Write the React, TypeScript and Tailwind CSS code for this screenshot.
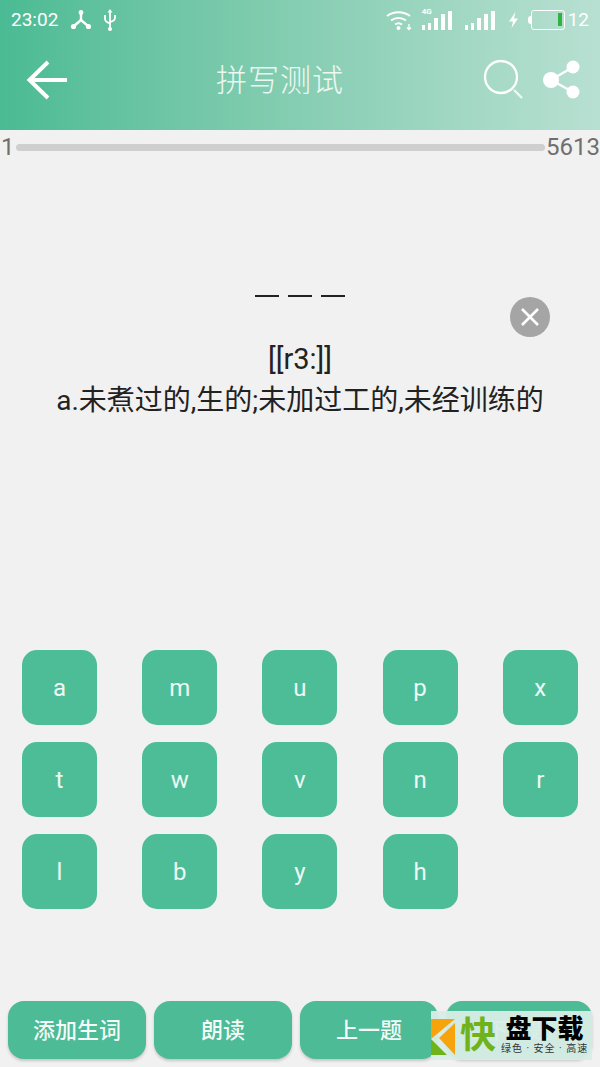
import React from 'react';

const CJK = "font-['Roboto','Noto_Sans_CJK_SC',sans-serif]";

const keyRows = [
  ['a', 'm', 'u', 'p', 'x'],
  ['t', 'w', 'v', 'n', 'r'],
  ['l', 'b', 'y', 'h'],
];

const StatusBar = () => (
  <div className="flex h-[38px] items-center pl-[11px] pr-[11px] pt-[1px] text-white">
    <span className="text-[19px] leading-none">23:02</span>
    {/* tethering */}
    <svg className="ml-[12px]" width="22" height="22" viewBox="0 0 22 22" fill="none" stroke="#fff" strokeWidth="2.4">
      <path d="M11 3v8M11 11l-7 6M11 11l7 6" />
      <circle cx="11" cy="3.5" r="2.4" fill="#fff" stroke="none" />
      <circle cx="3.5" cy="17.5" r="2.6" fill="#fff" stroke="none" />
      <circle cx="18.5" cy="17.5" r="2.6" fill="#fff" stroke="none" />
    </svg>
    {/* usb */}
    <svg className="ml-[11px]" width="14" height="24" viewBox="0 0 14 24" fill="none" stroke="#fff" strokeWidth="1.8">
      <path d="M7 2v19" />
      <path d="M4.5 4.5 7 1l2.5 3.5z" fill="#fff" stroke="none" />
      <path d="M2 7v4c0 2 1 3 5 4.5M12 7v3c0 2-1 3-5 4" />
      <circle cx="7" cy="21" r="2" fill="#fff" stroke="none" />
    </svg>
    <div className="ml-auto flex items-center">
      {/* wifi */}
      <svg width="28" height="22" viewBox="0 0 28 22" fill="none" stroke="#fff" strokeWidth="2">
        <path d="M2 7c6.500-5 16.500-5 23 0M6 11.500c4.500-3.500 10.500-3.500 15 0M10 15.500c2-1.500 5-1.500 7 0" />
        <circle cx="13.500" cy="19" r="2" fill="#fff" stroke="none" />
        <path d="M24 15v5M22 18.500l2 2 2-2" strokeWidth="1.300" />
      </svg>
      {/* sim 1 */}
      <div className="relative ml-[9px] flex h-[20px] items-end gap-[3px]">
        <span className="absolute left-0 top-[-2px] text-[8px] font-bold leading-none">4G</span>
        <i className="h-[5px] w-[3px] bg-white" />
        <i className="h-[7px] w-[3px] bg-white" />
        <i className="h-[12px] w-[4px] bg-white" />
        <i className="h-[16px] w-[4px] bg-white" />
        <i className="h-[19px] w-[4px] bg-white" />
      </div>
      {/* sim 2 */}
      <div className="ml-[13px] flex h-[20px] items-end gap-[3px]">
        <i className="h-[5px] w-[3px] bg-white" />
        <i className="h-[7px] w-[3px] bg-white" />
        <i className="h-[12px] w-[4px] bg-white" />
        <i className="h-[16px] w-[4px] bg-white" />
        <i className="h-[19px] w-[4px] bg-white" />
      </div>
      {/* charging bolt */}
      <svg className="ml-[13px]" width="11" height="18" viewBox="0 0 11 18">
        <path d="M7.500 1 1 10.500h4L3.500 17 10 7.500H6z" fill="#fff" />
      </svg>
      {/* battery */}
      <div className="ml-[9px] flex items-center">
        <i className="h-[8px] w-[3px] rounded-l-sm bg-white" />
        <div className="flex h-[20px] w-[34px] items-center justify-end rounded-[3px] border-[1.500px] border-white pr-[2px]">
          <i className="h-[13px] w-[4px] bg-[#2fb53f]" />
        </div>
      </div>
      <span className="ml-[3px] text-[19px] leading-none">12</span>
    </div>
  </div>
);

const Toolbar = () => (
  <div className="flex flex-1 items-center pb-[8px]">
    <svg className="ml-[26px]" width="42" height="42" viewBox="0 0 42 42" fill="none" stroke="#fff" strokeWidth="4">
      <path d="M41 21H4M22 3 3.500 21 22 39" />
    </svg>
    <h1 className="flex-1 text-center text-[31px] font-light leading-none tracking-[1px] text-white/85 pl-[10px]">拼写测试</h1>
    <svg width="44" height="44" viewBox="0 0 44 44" fill="none" stroke="#fff" strokeWidth="2.300">
      <circle cx="19" cy="19" r="16" />
      <path d="M32 32l8 8" strokeOpacity="0.800" />
    </svg>
    <svg className="ml-[16px] mr-[20px]" width="38" height="40" viewBox="0 0 38 40" fill="#fff">
      <circle cx="9" cy="20" r="8" />
      <circle cx="31" cy="7" r="6.500" />
      <circle cx="31" cy="32" r="6.500" />
      <path d="M9 20 31 7M9 20l22 12" stroke="#fff" strokeWidth="2.500" />
    </svg>
  </div>
);

const LetterKey = ({ letter }: { letter: string }) => (
  <div className="flex h-[75px] w-[75px] items-center justify-center rounded-[15px] bg-[#4dbd97] text-[24px] text-white/90">
    {letter}
  </div>
);

const ActionButton = ({ label, className }: { label: string; className: string }) => (
  <div
    className={`flex h-[58px] items-center justify-center rounded-[16px] bg-[#4dbb95] text-[22px] font-medium text-white/95 shadow-[0_2px_3px_rgba(0,0,0,0.18)] ${className}`}
  >
    {label}
  </div>
);

export default function App() {
  return (
    <div className={`relative flex h-[1067px] w-[600px] flex-col overflow-hidden bg-[#f1f1f1] ${CJK}`}>
      <header className="flex h-[130px] flex-col bg-gradient-to-r from-[#4abb94] to-[#b8e0d2]">
        <StatusBar />
        <Toolbar />
      </header>

      {/* progress */}
      <div className="flex h-[34px] items-center text-[24px] leading-none text-[#6f6f6f]">
        <span className="pl-[1px]">1</span>
        <div className="mx-[1px] h-[7px] flex-1 rounded-full bg-[#cfcfcf]" />
        <span>5613</span>
      </div>

      {/* question */}
      <div className="flex h-[486px] flex-col text-[#222]">
        <div className="mt-[110px] flex justify-center gap-[9px]">
          <i className="mt-[21px] h-[2px] w-[24px] bg-[#222]" />
          <i className="mt-[21px] h-[2px] w-[24px] bg-[#222]" />
          <i className="mt-[21px] h-[2px] w-[24px] bg-[#222]" />
        </div>
        <div className="mt-[0px] flex justify-end pr-[50px]">
          <div className="flex h-[40px] w-[40px] items-center justify-center rounded-full bg-[#a5a5a5]">
            <svg width="22" height="22" viewBox="0 0 22 22" fill="none" stroke="#fff" strokeWidth="2.600">
              <path d="M3 3l16 16M19 3 3 19" />
            </svg>
          </div>
        </div>
        <p className="mt-[2px] text-center text-[29px] leading-[41px]">[[r3:]]</p>
        <p className="text-center text-[28px] leading-[41px] whitespace-nowrap">a.未煮过的,生的;未加过工的,未经训练的</p>
      </div>

      {/* letter keys */}
      <div className="flex flex-col gap-[17px] px-[22px]">
        {keyRows.map((row) => (
          <div key={row.join('')} className="grid grid-cols-5 justify-items-start gap-x-[45px]">
            {row.map((letter) => (
              <LetterKey key={letter} letter={letter} />
            ))}
          </div>
        ))}
      </div>

      {/* bottom actions */}
      <div className="mt-[92px] flex gap-[8px] pl-[8px] pr-[8px]">
        <ActionButton label="添加生词" className="w-[138px]" />
        <ActionButton label="朗读" className="w-[138px]" />
        <ActionButton label="上一题" className="w-[138px]" />
        <ActionButton label="下一题" className="w-[146px]" />
      </div>

      {/* download site badge over the corner */}
      <div className="absolute bottom-[7px] left-[431px] flex h-[49px] w-[161px] items-center bg-[#d8ece6]/95">
        <svg className="absolute left-0 top-[8px]" width="24" height="38" viewBox="0 0 24 38">
          <path d="M0 0h24L0 20z" fill="#f7a30b" />
          <path d="M24 4v32L8 19z" fill="#f7a30b" />
          <path d="M0 20l16 16H0z" fill="#6fb21a" />
        </svg>
        <span className="ml-[29px] text-[36px] font-bold leading-none text-[#6fb21a]">快</span>
        <div className="ml-[5px] flex flex-col items-center">
          <span className="text-[26px] font-black leading-[27px] text-black whitespace-nowrap">盘下载</span>
          <span className="text-[10px] leading-[12px] text-[#333] whitespace-nowrap tracking-[1px]">绿色 · 安全 · 高速</span>
        </div>
      </div>
    </div>
  );
}
